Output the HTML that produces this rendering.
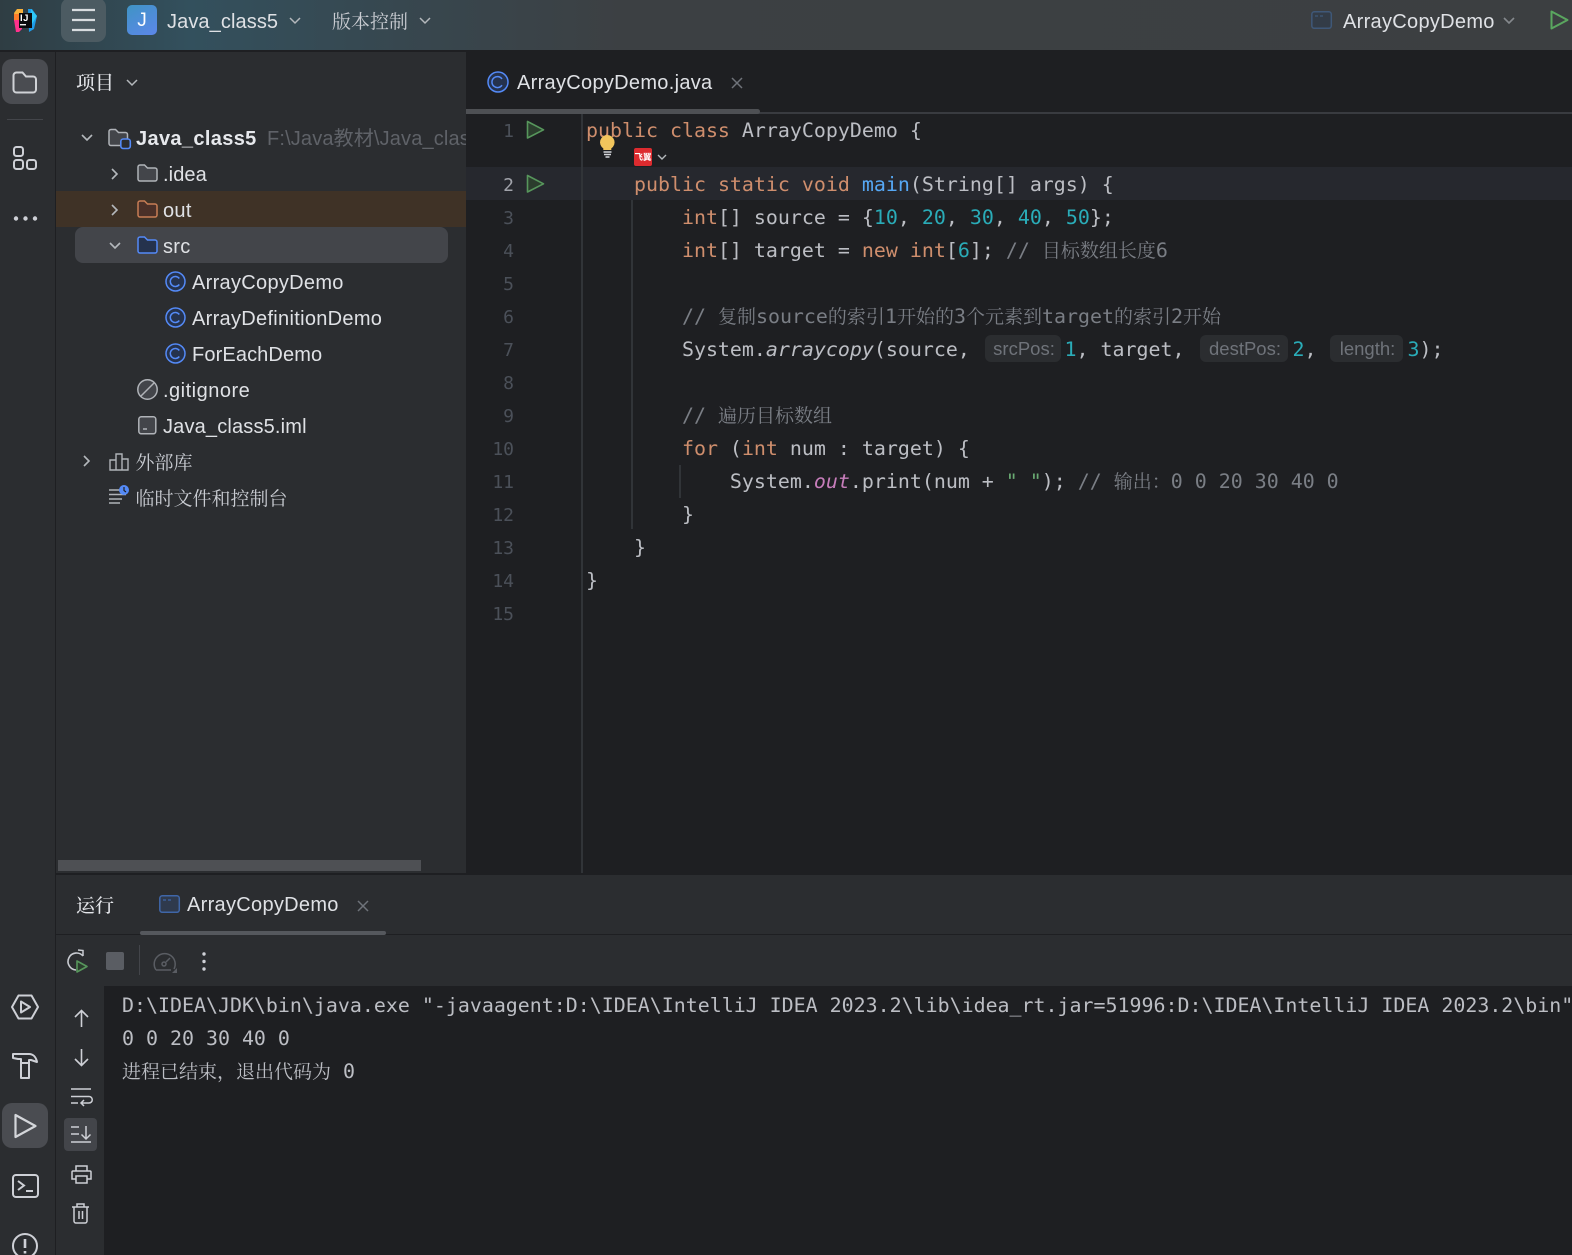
<!DOCTYPE html>
<html><head><meta charset="utf-8"><style>
html,body{margin:0;padding:0;background:#1e1f22}
#r{position:relative;width:1572px;height:1255px;overflow:hidden;background:#1e1f22;font-family:"Liberation Sans","Noto Sans CJK SC",sans-serif;color:#dfe1e5}
#r>*{position:absolute}
.a{position:absolute}
.t{position:absolute;white-space:nowrap;font-size:20px;line-height:36px;height:36px;color:#dfe1e5;letter-spacing:.3px}
.z{position:absolute;white-space:nowrap;font-family:"Noto Serif CJK SC",serif;font-size:19px;line-height:36px;height:36px;color:#c9ccd2}
.m{position:absolute;white-space:pre;font-family:"DejaVu Sans Mono","Noto Serif CJK SC",monospace;font-size:19.93px;line-height:33px;height:33px;color:#bcbec4}
.m i{font-style:italic}
.k{color:#cf8e6d}.n{color:#2aacb8}.f{color:#56a8f5}.c{color:#7a7e85}.s{color:#6aab73}
.h{font-family:"Noto Serif CJK SC",serif;font-size:19px;line-height:0}
.ln{position:absolute;width:40px;left:474px;text-align:right;font-family:"DejaVu Sans Mono",monospace;font-size:18px;line-height:33px;height:33px;color:#4b5059}
.hint{position:absolute;box-sizing:border-box;padding-left:2px;background:#2b2d30;border-radius:6px;color:#6f737a;font-size:18.5px;line-height:27px;height:27px;text-align:center}
svg{position:absolute;overflow:visible;fill:none}
</style></head><body><div id="r">

<!-- top bar -->
<div style="left:0;top:0;width:1572px;height:50px;background:linear-gradient(90deg,#2f3d43 0,#33505d 190px,#37474f 400px,#3c4043 620px,#3c3f41 100%)"></div>
<svg style="left:13px;top:8px" width="25" height="25" viewBox="0 0 25 25">
<path d="M1 5l3-4h6v8H2z" fill="#f8b13c"/><path d="M1 6h6v7H1z" fill="#ff7d2b"/><path d="M1 12h8v9l-3 3H3z" fill="#ff318c"/><path d="M15 1h4l5 7-3 13-5 3z" fill="#1e9be8"/><path d="M18 1l6 7-5 8z" fill="#2fc8f5"/>
<rect x="6" y="5" width="13" height="15" fill="#0a0a0c"/><rect x="7" y="16" width="6" height="1.400" fill="#eee"/></svg>
<div class="a" style="left:20px;top:13px;font:bold 9.500px/11px 'Liberation Sans',sans-serif;color:#fff;white-space:nowrap;letter-spacing:.5px">IJ</div>
<div style="left:61px;top:-2px;width:45px;height:44px;background:#4c5b62;border-radius:9px"></div>
<svg style="left:71px;top:8px" width="26" height="24" stroke="#d8dcdf" stroke-width="2.200"><path d="M1 2h23M1 12h23M1 22h23"/></svg>
<div style="left:127px;top:5px;width:30px;height:30px;border-radius:5px;background:linear-gradient(150deg,#3f94c4,#5c87ea);color:#fff;font-size:19px;line-height:32px;text-align:center">J</div>
<div class="t" style="left:167px;top:4px;letter-spacing:.1px">Java_class5</div>
<svg style="left:289px;top:17px" width="12" height="8" stroke="#b4b8bc" stroke-width="1.500"><path d="M1 1l5 5 5-5"/></svg>
<div class="z" style="left:332px;top:3px">版本控制</div>
<svg style="left:419px;top:17px" width="12" height="8" stroke="#b4b8bc" stroke-width="1.500"><path d="M1 1l5 5 5-5"/></svg>
<svg style="left:1311px;top:11px" width="21" height="18" stroke="#3f5878" stroke-width="1.500"><rect x=".8" y=".8" width="19.500" height="16.500" rx="2.500" fill="#333c47"/><path d="M4 5h3M9 5h3" stroke-width="1.200"/></svg>
<div class="t" style="left:1343px;top:4px">ArrayCopyDemo</div>
<svg style="left:1503px;top:17px" width="12" height="8" stroke="#85898d" stroke-width="1.600"><path d="M1 1l5 5 5-5"/></svg>
<svg style="left:1550px;top:10px" width="19" height="20" stroke="#5aa65f" stroke-width="2"><path d="M1.500 1.500v17l16-8.500z" stroke-linejoin="round"/></svg>

<!-- left rail -->
<div style="left:0;top:52px;width:55px;height:1203px;background:#2b2d30"></div>
<div style="left:55px;top:52px;width:1px;height:1203px;background:#1e1f22"></div>
<div style="left:2px;top:59px;width:46px;height:45px;background:#4a4c51;border-radius:10px"></div>
<svg style="left:12px;top:71px" width="26" height="23" stroke="#d0d2d6" stroke-width="2"><path d="M1.500 4.500a3 3 0 0 1 3-3h6l3.500 4h7a3 3 0 0 1 3 3v10a3 3 0 0 1-3 3h-16.500a3 3 0 0 1-3-3z"/></svg>
<div style="left:7px;top:119px;width:36px;height:1px;background:#43454a"></div>
<svg style="left:13px;top:146px" width="25" height="25" stroke="#ced0d6" stroke-width="2"><rect x="1" y="1" width="9" height="9" rx="2.500"/><rect x="1" y="14" width="9" height="9" rx="2.500"/><rect x="14" y="14" width="9" height="9" rx="2.500"/></svg>
<svg style="left:13px;top:216px" width="25" height="5"><circle cx="3" cy="2.500" r="2.200" fill="#ced0d6"/><circle cx="12.500" cy="2.500" r="2.200" fill="#ced0d6"/><circle cx="22" cy="2.500" r="2.200" fill="#ced0d6"/></svg>
<svg style="left:11px;top:994px" width="28" height="26" stroke="#ced0d6" stroke-width="2" stroke-linejoin="round"><path d="M1 13l6.500-11.500h13l6.500 11.500-6.500 11.500h-13z"/><path d="M10 7.500v11l9-5.500z"/></svg>
<svg style="left:12px;top:1052px" width="27" height="28" stroke="#ced0d6" stroke-width="2" stroke-linejoin="round"><path d="M1 2h16c4 0 7 3 8 8l-6-2h-2v3H9V7H6L1 6z"/><path d="M9 11v15h8V11"/></svg>
<div style="left:2px;top:1103px;width:46px;height:45px;background:#4a4c51;border-radius:10px"></div>
<svg style="left:14px;top:1113px" width="23" height="26" stroke="#d4d6da" stroke-width="2.200" stroke-linejoin="round"><path d="M1.500 2v22l20-11z"/></svg>
<svg style="left:12px;top:1174px" width="27" height="25" stroke="#ced0d6" stroke-width="2"><rect x="1" y="1" width="25" height="22" rx="3"/><path d="M6 7l6 4.500-6 4.500M14 17h7"/></svg>
<svg style="left:12px;top:1233px" width="27" height="27" stroke="#ced0d6" stroke-width="2"><circle cx="13" cy="13" r="12"/><path d="M13 6v9M13 18v2.500" stroke-width="2.600"/></svg>

<!-- project panel -->
<div style="left:56px;top:52px;width:410px;height:821px;background:#2b2d30"></div>
<div class="z" style="left:76px;top:64px;color:#e4e6ea;font-weight:500">项目</div>
<svg style="left:126px;top:79px" width="12" height="8" stroke="#b4b8bc" stroke-width="1.500"><path d="M1 1l5 5 5-5"/></svg>
<div style="left:56px;top:191px;width:410px;height:36px;background:#3f3226"></div>
<div style="left:75px;top:227px;width:373px;height:36px;background:#43454a;border-radius:8px"></div>

<svg style="left:81px;top:134px" width="12" height="8" stroke="#b4b8bc" stroke-width="1.600"><path d="M1 1l5 5 5-5"/></svg>
<svg style="left:108px;top:128px" width="24" height="22"><path d="M1 3.500a2 2 0 0 1 2-2h4.500l3 3h7a2 2 0 0 1 2 2v9a2 2 0 0 1-2 2h-14.500a2 2 0 0 1-2-2z" stroke="#b0b3b8" stroke-width="1.500" fill="#43454a"/><rect x="12.800" y="11" width="9.500" height="9.500" rx="2.500" stroke="#548af7" stroke-width="1.600" fill="#2b2d30"/></svg>
<div class="t" style="left:136px;top:121px;font-weight:bold;color:#e6e8ec;letter-spacing:.35px">Java_class5</div>
<div style="left:268px;top:121px;width:198px;height:36px;overflow:hidden"><div class="t" style="left:-1px;top:0;color:#5f6268;letter-spacing:.15px">F:\Java教材\Java_class5</div></div>

<svg style="left:111px;top:168px" width="8" height="12" stroke="#b4b8bc" stroke-width="1.600"><path d="M1 1l5 5-5 5"/></svg>
<svg style="left:137px;top:164px" width="21" height="18"><path d="M1 3a2 2 0 0 1 2-2h4.500l3 3h7.500a2 2 0 0 1 2 2v9a2 2 0 0 1-2 2h-15a2 2 0 0 1-2-2z" stroke="#b0b3b8" stroke-width="1.500" fill="#43454a"/></svg>
<div class="t" style="left:163px;top:157px;letter-spacing:.1px">.idea</div>

<svg style="left:111px;top:204px" width="8" height="12" stroke="#b4b8bc" stroke-width="1.600"><path d="M1 1l5 5-5 5"/></svg>
<svg style="left:137px;top:200px" width="21" height="18"><path d="M1 3a2 2 0 0 1 2-2h4.500l3 3h7.500a2 2 0 0 1 2 2v9a2 2 0 0 1-2 2h-15a2 2 0 0 1-2-2z" stroke="#c77d55" stroke-width="1.500" fill="#4a3028"/></svg>
<div class="t" style="left:163px;top:193px">out</div>

<svg style="left:109px;top:242px" width="12" height="8" stroke="#b4b8bc" stroke-width="1.600"><path d="M1 1l5 5 5-5"/></svg>
<svg style="left:137px;top:236px" width="21" height="18"><path d="M1 3a2 2 0 0 1 2-2h4.500l3 3h7.500a2 2 0 0 1 2 2v9a2 2 0 0 1-2 2h-15a2 2 0 0 1-2-2z" stroke="#548af7" stroke-width="1.500" fill="#25324d"/></svg>
<div class="t" style="left:163px;top:229px">src</div>

<svg style="left:165px;top:271px" width="21" height="21" stroke="#548af7" stroke-width="1.500"><circle cx="10.500" cy="10.500" r="9.500" fill="#25324d"/><path d="M14.300 7.500a5 5 0 1 0 0 6"/></svg>
<div class="t" style="left:192px;top:265px">ArrayCopyDemo</div>
<svg style="left:165px;top:307px" width="21" height="21" stroke="#548af7" stroke-width="1.500"><circle cx="10.500" cy="10.500" r="9.500" fill="#25324d"/><path d="M14.300 7.500a5 5 0 1 0 0 6"/></svg>
<div class="t" style="left:192px;top:301px">ArrayDefinitionDemo</div>
<svg style="left:165px;top:343px" width="21" height="21" stroke="#548af7" stroke-width="1.500"><circle cx="10.500" cy="10.500" r="9.500" fill="#25324d"/><path d="M14.300 7.500a5 5 0 1 0 0 6"/></svg>
<div class="t" style="left:192px;top:337px;letter-spacing:.12px">ForEachDemo</div>
<svg style="left:137px;top:379px" width="21" height="21" stroke="#b0b3b8" stroke-width="1.500"><circle cx="10.500" cy="10.500" r="9.700" fill="#43454a"/><path d="M4 17L17 4"/></svg>
<div class="t" style="left:163px;top:373px;letter-spacing:.5px">.gitignore</div>
<svg style="left:138px;top:416px" width="19" height="19" stroke="#b0b3b8" stroke-width="1.500"><rect x=".8" y=".8" width="17" height="17" rx="2.500" fill="#43454a"/><path d="M5 13h4"/></svg>
<div class="t" style="left:163px;top:409px;letter-spacing:.17px">Java_class5.iml</div>

<svg style="left:83px;top:455px" width="8" height="12" stroke="#b4b8bc" stroke-width="1.600"><path d="M1 1l5 5-5 5"/></svg>
<svg style="left:109px;top:453px" width="20" height="18" stroke="#b0b3b8" stroke-width="1.400"><path d="M1 7h6v10H1zM7 1h6v16H7zM13 6h6v11h-6z"/></svg>
<div class="z" style="left:135.500px;top:444px">外部库</div>
<svg style="left:109px;top:485px" width="22" height="20"><path d="M0 6h13M0 10.500h17M0 15h13M0 19h11" stroke="#b0b3b8" stroke-width="1.500" transform="translate(0 -1)"/><circle cx="15" cy="5" r="5" fill="#548af7"/><path d="M15 2v3.500l2 1.500" stroke="#1e1f22" stroke-width="1.200"/></svg>
<div class="z" style="left:135.500px;top:480px">临时文件和控制台</div>

<div style="left:58px;top:860px;width:363px;height:11px;background:#4e5054"></div>

<!-- editor -->
<svg style="left:487px;top:71px" width="22" height="22" stroke="#548af7" stroke-width="1.500"><circle cx="11" cy="11" r="10" fill="#25324d"/><path d="M15 8a5.500 5.500 0 1 0 0 6.200"/></svg>
<div class="t" style="left:517px;top:65px">ArrayCopyDemo.java</div>
<svg style="left:731px;top:77px" width="12" height="12" stroke="#6f737a" stroke-width="1.500"><path d="M1 1l10 10M11 1L1 11"/></svg>
<div style="left:466px;top:112px;width:1106px;height:2px;background:#393b40"></div>
<div style="left:466px;top:109px;width:294px;height:5px;background:#4e5054;border-radius:0 3px 3px 0"></div>
<div style="left:466px;top:167px;width:1106px;height:33px;background:#26282e"></div>
<div style="left:581px;top:114px;width:2px;height:759px;background:#313438"></div>
<div style="left:631px;top:200px;width:2px;height:329px;background:#313438"></div>
<div style="left:679px;top:465px;width:2px;height:33px;background:#313438"></div>

<div class="ln" style="top:115px;color:#4b5059">1</div>
<div class="ln" style="top:169px;color:#a1a3ab">2</div>
<div class="ln" style="top:202px">3</div>
<div class="ln" style="top:235px">4</div>
<div class="ln" style="top:268px">5</div>
<div class="ln" style="top:301px">6</div>
<div class="ln" style="top:334px">7</div>
<div class="ln" style="top:367px">8</div>
<div class="ln" style="top:400px">9</div>
<div class="ln" style="top:433px">10</div>
<div class="ln" style="top:466px">11</div>
<div class="ln" style="top:499px">12</div>
<div class="ln" style="top:532px">13</div>
<div class="ln" style="top:565px">14</div>
<div class="ln" style="top:598px">15</div>
<svg style="left:526px;top:120px" width="19" height="20" stroke="#57965c" stroke-width="1.600" stroke-linejoin="round"><path d="M1.500 1.500v16.500l16-8.200z" fill="#2b3d2d"/></svg>
<svg style="left:526px;top:174px" width="19" height="20" stroke="#57965c" stroke-width="1.600" stroke-linejoin="round"><path d="M1.500 1.500v16.500l16-8.200z" fill="#2b3d2d"/></svg>

<div class="m" style="left:586px;top:114px"><span class="k">public class</span> ArrayCopyDemo {</div>
<div class="m" style="left:586px;top:168px">    <span class="k">public static void</span> <span class="f">main</span>(String[] args) {</div>
<div class="m" style="left:586px;top:201px">        <span class="k">int</span>[] source = {<span class="n">10</span>, <span class="n">20</span>, <span class="n">30</span>, <span class="n">40</span>, <span class="n">50</span>};</div>
<div class="m" style="left:586px;top:234px">        <span class="k">int</span>[] target = <span class="k">new int</span>[<span class="n">6</span>]; <span class="c">// <span class="h">目标数组长度</span>6</span></div>
<div class="m" style="left:586px;top:300px">        <span class="c">// <span class="h">复制</span>source<span class="h">的索引</span>1<span class="h">开始的</span>3<span class="h">个元素到</span>target<span class="h">的索引</span>2<span class="h">开始</span></span></div>
<div class="m" style="left:586px;top:333px">        System.<i>arraycopy</i>(source,</div>
<div class="hint" style="left:985px;top:335px;width:76px">srcPos:</div>
<div class="m" style="left:1064.500px;top:333px"><span class="n">1</span>, target,</div>
<div class="hint" style="left:1200px;top:335px;width:88px">destPos:</div>
<div class="m" style="left:1292.500px;top:333px"><span class="n">2</span>,</div>
<div class="hint" style="left:1330px;top:335px;width:73px">length:</div>
<div class="m" style="left:1407.500px;top:333px"><span class="n">3</span>);</div>
<div class="m" style="left:586px;top:399px">        <span class="c">// <span class="h">遍历目标数组</span></span></div>
<div class="m" style="left:586px;top:432px">        <span class="k">for</span> (<span class="k">int</span> num : target) {</div>
<div class="m" style="left:586px;top:465px">            System.<i style="color:#c77dbb">out</i>.print(num + <span class="s">" "</span>); <span class="c">// <span class="h">输出：</span>0 0 20 30 40 0</span></div>
<div class="m" style="left:586px;top:498px">        }</div>
<div class="m" style="left:586px;top:531px">    }</div>
<div class="m" style="left:586px;top:564px">}</div>

<svg style="left:600px;top:135px" width="15" height="23"><path d="M7.300 0a7.300 7.300 0 0 0-4 13.400V15h8v-1.600A7.300 7.300 0 0 0 7.300 0z" fill="#f2c55c"/><path d="M3.500 17h8M4 19.500h7M5.500 22h4" stroke="#d4d6da" stroke-width="1.400"/></svg>
<div style="left:634px;top:148px;width:18px;height:18px;background:#dd2b2f;border-radius:2px;color:#fff;font:bold 8.500px/18px 'Noto Sans CJK SC',sans-serif;text-align:center;white-space:nowrap;overflow:hidden">飞翼</div>
<svg style="left:657px;top:154px" width="10" height="7" stroke="#b4b8bc" stroke-width="1.400"><path d="M1 1l4 4 4-4"/></svg>

<!-- bottom panel -->
<div style="left:56px;top:873px;width:1516px;height:2px;background:#1e1f22"></div>
<div style="left:56px;top:875px;width:1516px;height:111px;background:#2b2d30"></div>
<div style="left:56px;top:986px;width:48px;height:269px;background:#2b2d30"></div>
<div style="left:56px;top:934px;width:1516px;height:1px;background:#1e1f22"></div>
<div style="left:140px;top:931px;width:246px;height:4px;background:#55585d;border-radius:2px"></div>
<div class="z" style="left:76px;top:887px;color:#e4e6ea;font-weight:500">运行</div>
<svg style="left:159px;top:895px" width="21" height="18" stroke="#3f66a8" stroke-width="1.500"><rect x=".8" y=".8" width="19.500" height="16.500" rx="2.500" fill="#2f3a4d"/><path d="M4 5h3M9 5h3" stroke-width="1.200"/></svg>
<div class="t" style="left:187px;top:887px">ArrayCopyDemo</div>
<svg style="left:357px;top:900px" width="12" height="12" stroke="#6f737a" stroke-width="1.500"><path d="M1 1l10 10M11 1L1 11"/></svg>

<svg style="left:66px;top:951px" width="22" height="22"><path d="M17 5a8.500 8.500 0 1 0-7 14" stroke="#c9ccd2" stroke-width="1.600"/><path d="M12 -1l5 .5v5.500" stroke="#c9ccd2" stroke-width="1.500"/><path d="M11 10v11l10-5.500z" stroke="#57965c" stroke-width="1.600" fill="#2b3d2d" stroke-linejoin="round"/></svg>
<div style="left:106px;top:952px;width:18px;height:18px;background:#5a5d63;border-radius:2px"></div>
<div style="left:139px;top:945px;width:1px;height:30px;background:#43454a"></div>
<svg style="left:153px;top:952px" width="25" height="22" stroke="#5a5d63" stroke-width="1.500"><path d="M3 18a10.500 10.500 0 1 1 18-1M3 18h15"/><circle cx="11" cy="12" r="2"/><path d="M13 10l4-4"/><path d="M19 21l5-5v5z" fill="#5a5d63" stroke="none"/></svg>
<svg style="left:202px;top:952px" width="4" height="19"><circle cx="2" cy="2" r="1.700" fill="#ced0d6"/><circle cx="2" cy="9.500" r="1.700" fill="#ced0d6"/><circle cx="2" cy="17" r="1.700" fill="#ced0d6"/></svg>

<svg style="left:74px;top:1009px" width="15" height="19" stroke="#ced0d6" stroke-width="1.600"><path d="M7.500 18V1.500M1 8l6.500-6.500L14 8"/></svg>
<svg style="left:74px;top:1048px" width="15" height="19" stroke="#ced0d6" stroke-width="1.600"><path d="M7.500 1v16.500M1 11l6.500 6.500L14 11"/></svg>
<svg style="left:71px;top:1088px" width="21" height="18" stroke="#ced0d6" stroke-width="1.500"><path d="M0 1h20M0 8.500h18a3 3 0 0 1 0 6.500h-8M13 12l-3 3 3 3M0 15h7"/></svg>
<div style="left:64px;top:1118px;width:33px;height:33px;background:#43454a;border-radius:4px"></div>
<svg style="left:71px;top:1126px" width="21" height="18" stroke="#ced0d6" stroke-width="1.500"><path d="M0 1h8M0 8h8M0 16h20M15 0v13M10.500 8.500l4.500 4.500 4.500-4.500"/></svg>
<svg style="left:71px;top:1165px" width="21" height="19" stroke="#ced0d6" stroke-width="1.500"><path d="M5 6V1h11v5M5 14H1V7a1 1 0 0 1 1-1h17a1 1 0 0 1 1 1v7h-4M5 11h11v7H5z"/></svg>
<svg style="left:72px;top:1203px" width="18" height="21" stroke="#ced0d6" stroke-width="1.500"><path d="M0 4h17M5 4V1h7v3M2 4v14a2 2 0 0 0 2 2h9a2 2 0 0 0 2-2V4M7 8v8M10.500 8v8"/></svg>

<div style="left:104px;top:986px;width:1468px;height:269px;overflow:hidden">
<div class="m" style="left:18px;top:3px">D:\IDEA\JDK\bin\java.exe "-javaagent:D:\IDEA\IntelliJ IDEA 2023.2\lib\idea_rt.jar=51996:D:\IDEA\IntelliJ IDEA 2023.2\bin" -Dfile.encoding=UTF-8</div>
<div class="m" style="left:18px;top:36px">0 0 20 30 40 0</div>
<div class="m" style="left:18px;top:69px"><span class="h">进程已结束，退出代码为</span> 0</div>
</div>

</div></body></html>
